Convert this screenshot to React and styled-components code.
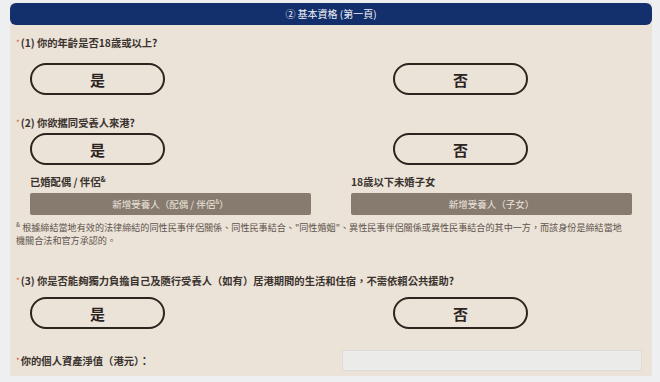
import styled, { createGlobalStyle } from "styled-components";

const Global = createGlobalStyle`
  body {
    margin: 0;
    background: #eeeff0;
    font-family: "Noto Sans CJK TC", "Noto Sans", sans-serif;
  }
`;

export default function App() {
  return (
    <>
      <Global />
      <Page>
        <Panel>
          <Header>② 基本資格 (第一頁)</Header>

          <Question top={11}>
            <Star>*</Star>(1) 你的年齡是否18歲或以上?
          </Question>
          <PillRow top={13}>
            <Pill>是</Pill>
            <Pill>否</Pill>
          </PillRow>

          <Question top={21}>
            <Star>*</Star>(2) 你欲攜同受養人來港?
          </Question>
          <PillRow top={3}>
            <Pill>是</Pill>
            <Pill>否</Pill>
          </PillRow>

          <Dependants>
            <div>
              <SubLabel>
                已婚配偶 / 伴侶<sup>&amp;</sup>
              </SubLabel>
              <AddButton>
                新增受養人（配偶 / 伴侶<sup>&amp;</sup>）
              </AddButton>
            </div>
            <div>
              <SubLabel>18歲以下未婚子女</SubLabel>
              <AddButton>新增受養人（子女）</AddButton>
            </div>
          </Dependants>

          <Footnote>
            <sup>&amp;</sup> 根據締結當地有效的法律締結的同性民事伴侶關係、同性民事結合、"同性婚姻"、異性民事伴侶關係或異性民事結合的其中一方，而該身份是締結當地
            <br />
            機關合法和官方承認的。
          </Footnote>

          <Question top={27}>
            <Star>*</Star>(3) 你是否能夠獨力負擔自己及隨行受養人（如有）居港期間的生活和住宿，不需依賴公共援助?
          </Question>
          <PillRow top={9}>
            <Pill>是</Pill>
            <Pill>否</Pill>
          </PillRow>

          <AssetRow>
            <Question top={0}>
              <Star>*</Star>你的個人資產淨值（港元）：
            </Question>
            <Input />
          </AssetRow>
        </Panel>
      </Page>
    </>
  );
}

const Page = styled.div`
  padding: 3px 8px 6px 10px;
`;

const Panel = styled.div`
  background: #ebe2d8;
  height: 373px;
  box-sizing: border-box;
  padding-bottom: 4px;
`;

const Header = styled.div`
  height: 22px;
  background: #13306c;
  border-radius: 6px;
  color: #f2f2f6;
  font-size: 10px;
  line-height: 22px;
  text-align: center;
`;

const Question = styled.div`
  margin-top: ${props => props.top}px;
  padding-left: 6px;
  font-size: 10.3px;
  line-height: 14px;
  font-weight: 700;
  color: #3a332e;
  white-space: nowrap;
`;

const Star = styled.span`
  color: #d0574c;
  font-weight: 400;
  font-size: 8px;
  vertical-align: top;
  margin-right: 1px;
`;

const PillRow = styled.div`
  display: flex;
  gap: 228px;
  margin-top: ${props => props.top}px;
  padding-left: 20px;
`;

const Pill = styled.button`
  width: 135px;
  height: 32px;
  box-sizing: border-box;
  border: 2px solid #2b241f;
  border-radius: 16px;
  background: transparent;
  font-family: inherit;
  font-size: 15px;
  font-weight: 700;
  color: #2b241f;
  padding: 0;
`;

const Dependants = styled.div`
  display: grid;
  grid-template-columns: 281px 281px;
  column-gap: 40px;
  margin-top: 10px;
  padding-left: 20px;
`;

const SubLabel = styled.div`
  font-size: 10.3px;
  line-height: 14px;
  font-weight: 700;
  color: #3a332e;
  sup {
    font-size: 7px;
    line-height: 0;
  }
`;

const AddButton = styled.div`
  margin-top: 4px;
  height: 22px;
  background: #877b70;
  border-radius: 2px;
  color: #ece4dc;
  font-size: 9.5px;
  line-height: 22px;
  text-align: center;
  sup {
    font-size: 6px;
    line-height: 0;
  }
`;

const Footnote = styled.div`
  margin-top: 6px;
  padding-left: 6px;
  font-size: 9.1px;
  line-height: 13px;
  color: #5e554d;
  white-space: nowrap;
  sup {
    font-size: 6px;
    line-height: 0;
  }
`;

const AssetRow = styled.div`
  display: flex;
  align-items: center;
  justify-content: space-between;
  margin-top: 21px;
  padding-right: 10px;
`;

const Input = styled.input`
  width: 300px;
  height: 21px;
  box-sizing: border-box;
  background: #ebebea;
  border: 1px solid #dcdad6;
  border-radius: 2px;
`;
